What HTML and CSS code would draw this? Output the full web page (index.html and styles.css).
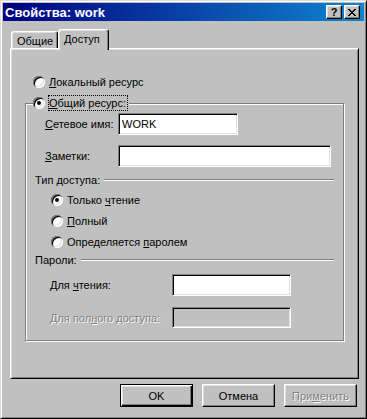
FILE: index.html
```html
<!DOCTYPE html>
<html lang="ru">
<head>
  <meta charset="UTF-8">
  <title>Свойства: work</title>
  <link rel="stylesheet" href="styles.css">
</head>
<body>
  <div class="window">
    <!-- Title bar -->
    <div class="titlebar">
      <span class="title">Свойства: work</span>
      <span class="caption-btn help">?</span>
      <span class="caption-btn close">
        <svg width="8" height="7" viewBox="0 0 8 7"><path d="M0 0h2v1h-2z M6 0h2v1h-2z M1 1h2v1h-2z M5 1h2v1h-2z M2 2h4v1h-4z M3 3h2v1h-2z M2 4h4v1h-4z M1 5h2v1h-2z M5 5h2v1h-2z M0 6h2v1h-2z M6 6h2v1h-2z" fill="#000"/></svg>
      </span>
    </div>

    <!-- Property sheet -->
    <div class="sheet">
      <div class="tabs">
        <div class="tab">Общие</div>
        <div class="tab active">Доступ</div>
      </div>
      <div class="panel">
        <div class="radio-row local">
          <span class="radio"></span>
          <span class="radio-label"><u>Л</u>окальный ресурс</span>
        </div>

        <div class="group">
          <div class="radio-row group-legend">
            <span class="radio checked"></span>
            <span class="radio-label focus"><u>О</u>бщий ресурс:</span>
          </div>

          <div class="field-row name-row">
            <span class="label name-label"><u>С</u>етевое имя:</span>
            <input class="field name-field" type="text" value="WORK">
          </div>
          <div class="field-row notes-row">
            <span class="label name-label"><u>З</u>аметки:</span>
            <input class="field notes-field" type="text" value="">
          </div>

          <div class="section">
            <span>Тип доступа:</span>
            <div class="etch"></div>
          </div>
          <div class="radio-row access first">
            <span class="radio checked"></span>
            <span class="radio-label">Только <u>ч</u>тение</span>
          </div>
          <div class="radio-row access">
            <span class="radio"></span>
            <span class="radio-label"><u>П</u>олный</span>
          </div>
          <div class="radio-row access">
            <span class="radio"></span>
            <span class="radio-label">Определяется <u>п</u>аролем</span>
          </div>

          <div class="section passwords">
            <span>Пароли:</span>
            <div class="etch"></div>
          </div>
          <div class="field-row read-row">
            <span class="label pass-label">Для <u>ч</u>тения:</span>
            <input class="field pass-field" type="password" value="">
          </div>
          <div class="field-row full-row">
            <span class="label pass-label disabled">Для пол<u>н</u>ого доступа:</span>
            <input class="field pass-field small" type="password" value="" disabled>
          </div>
        </div>
      </div>
    </div>

    <!-- Dialog buttons -->
    <div class="footer">
      <button class="btn default">OK</button>
      <button class="btn">Отмена</button>
      <button class="btn" disabled>При<u>м</u>енить</button>
    </div>
  </div>
</body>
</html>
```

FILE: styles.css
```css
* {
  box-sizing: border-box;
}
html, body {
  margin: 0;
  padding: 0;
}
body {
  width: 367px;
  height: 419px;
  background-color: #c0c0c0;
  font-family: "Liberation Sans", Arial, sans-serif;
  font-size: 11px;
  color: #000;
}
u {
  text-underline-offset: 1px;
}
.window {
  width: 367px;
  height: 419px;
  padding: 2px;
  border: 1px solid;
  border-color: #dfdfdf #000 #000 #dfdfdf;
  box-shadow: inset 1px 1px 0 #fff, inset -1px -1px 0 #808080;
  display: flex;
  flex-direction: column;
}

/* Title bar */
.titlebar {
  flex: none;
  height: 18px;
  padding: 0 4px 0 2px;
  display: flex;
  align-items: center;
  background: linear-gradient(to right, #000080, #1084d0);
  color: #fff;
  font-size: 13px;
  font-weight: bold;
}
.title {
  flex: 1;
}
.caption-btn {
  width: 16px;
  height: 14px;
  display: flex;
  justify-content: center;
  align-items: center;
  background-color: #c0c0c0;
  border: 1px solid;
  border-color: #fff #000 #000 #fff;
  box-shadow: inset -1px -1px 0 #808080, inset 1px 1px 0 #dfdfdf;
  color: #000;
  font-size: 11px;
  line-height: 1;
}
.caption-btn + .caption-btn {
  margin-left: 2px;
}

/* Tabs and panel */
.sheet {
  flex: none;
  padding: 8px 5px 0 7px;
}
.tabs {
  height: 19px;
  padding-left: 1px;
  display: flex;
  align-items: flex-end;
}
.tab {
  width: 47px;
  height: 17px;
  padding: 3px 0 0 5px;
  line-height: 13px;
  border: 1px solid;
  border-bottom: none;
  border-color: #fff #000 transparent #fff;
  border-radius: 3px 3px 0 0;
  box-shadow: inset -1px 0 0 #808080, inset 1px 1px 0 #dfdfdf;
}
.tab.active {
  position: relative;
  z-index: 1;
  width: 51px;
  height: 21px;
  margin-bottom: -2px;
  background-color: #c0c0c0;
}
.panel {
  height: 331px;
  padding: 25px 0 0 14px;
  border: 1px solid;
  border-color: #fff #000 #000 #fff;
  box-shadow: inset 1px 1px 0 #dfdfdf, inset -1px -1px 0 #808080;
}

/* Radio buttons */
.radio-row {
  height: 16px;
  display: flex;
  align-items: center;
}
.radio-row.local {
  margin-left: 8px;
}
.radio {
  position: relative;
  flex: none;
  width: 12px;
  height: 12px;
  border-radius: 50%;
  background-color: #fff;
  box-shadow: inset 1px 1px 0 #808080, inset -1px -1px 0 #fff, inset 2px 2px 0 #000, inset -2px -2px 0 #dfdfdf;
}
.radio.checked::after {
  content: "";
  position: absolute;
  left: 4px;
  top: 4px;
  width: 4px;
  height: 4px;
  border-radius: 50%;
  background-color: #000;
}
.radio-label {
  margin-left: 4px;
  line-height: 14px;
}
.radio-label.focus {
  margin-left: 3px;
  padding-right: 1px;
  border: 1px dotted #000;
}

/* Group box */
.group {
  position: relative;
  width: 319px;
  height: 238px;
  margin-top: 13px;
  border: 1px solid #808080;
  box-shadow: inset 1px 1px 0 #fff, 1px 1px 0 #fff;
}
.group-legend {
  position: absolute;
  left: 7px;
  top: -9px;
  padding-right: 1px;
  background-color: #c0c0c0;
}
.field-row {
  display: flex;
  align-items: center;
}
.name-row {
  margin-top: 9px;
  padding-left: 19px;
}
.notes-row {
  margin-top: 10px;
  padding-left: 19px;
}
.name-label {
  width: 73px;
}
.field {
  height: 22px;
  margin: 0;
  padding: 2px 3px;
  border: 1px solid;
  border-color: #808080 #fff #fff #808080;
  box-shadow: inset 1px 1px 0 #000, inset -1px -1px 0 #dfdfdf;
  background-color: #fff;
  font-family: inherit;
  font-size: 11px;
  color: #000;
  outline: none;
}
.field:disabled {
  background-color: #c0c0c0;
}
.name-field {
  width: 120px;
}
.notes-field {
  width: 213px;
}
.section {
  height: 14px;
  margin-top: 6px;
  padding-left: 9px;
  display: flex;
  align-items: center;
}
.section.passwords {
  margin-top: 3px;
}
.etch {
  flex: 1;
  height: 2px;
  margin: 0 9px 0 4px;
  border-top: 1px solid #808080;
  border-bottom: 1px solid #fff;
}
.radio-row.access {
  margin-top: 5px;
  padding-left: 25px;
}
.read-row {
  margin-top: 7px;
  padding-left: 24px;
}
.full-row {
  margin-top: 11px;
  padding-left: 24px;
}
.pass-label {
  width: 122px;
}
.pass-field {
  width: 119px;
}
.pass-field.small {
  height: 21px;
}
.disabled {
  color: #808080;
  text-shadow: 1px 1px 0 #fff;
}

/* Dialog buttons */
.footer {
  flex: none;
  margin-top: 5px;
  padding-right: 7px;
  display: flex;
  justify-content: flex-end;
  gap: 9px;
}
.btn {
  width: 73px;
  height: 23px;
  margin: 0;
  padding: 0;
  border: 1px solid;
  border-color: #fff #000 #000 #fff;
  box-shadow: inset -1px -1px 0 #808080, inset 1px 1px 0 #dfdfdf;
  background-color: #c0c0c0;
  font-family: inherit;
  font-size: 11px;
  color: #000;
}
.btn.default {
  border-color: #000;
  box-shadow: inset 1px 1px 0 #fff, inset -1px -1px 0 #000, inset -2px -2px 0 #808080, inset 2px 2px 0 #dfdfdf;
}
.btn:disabled {
  color: #808080;
  text-shadow: 1px 1px 0 #fff;
}
```
